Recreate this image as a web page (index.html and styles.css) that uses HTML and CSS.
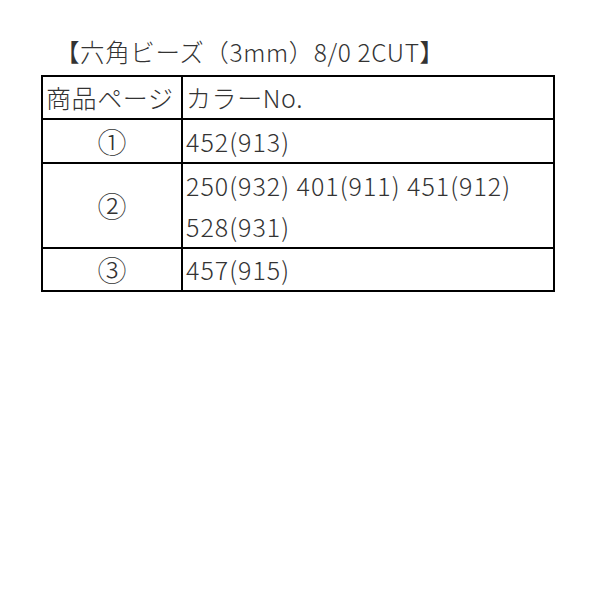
FILE: index.html
```html
<!DOCTYPE html>
<html lang="ja">
<head>
<meta charset="utf-8">
<link rel="stylesheet" href="styles.css">
</head>
<body>
<div class="page">
  <p class="title">【六角ビーズ（3mm）8/0 2CUT】</p>
  <table class="colors">
    <tr class="row-head">
      <td class="c-page head">商品ページ</td>
      <td class="c-color head">カラーNo.</td>
    </tr>
    <tr class="row-1">
      <td class="c-page center">①</td>
      <td class="c-color">452(913)</td>
    </tr>
    <tr class="row-2">
      <td class="c-page center">②</td>
      <td class="c-color">250(932) 401(911) 451(912)<br>528(931)</td>
    </tr>
    <tr class="row-3">
      <td class="c-page center">③</td>
      <td class="c-color">457(915)</td>
    </tr>
  </table>
</div>
</body>
</html>
```
FILE: styles.css
```css
html, body {
  margin: 0;
  padding: 0;
  background: #fff;
}
.page {
  padding: 35px 0 0 41px;
  font-family: "Noto Sans CJK JP", "Noto Sans", sans-serif;
  font-weight: 300;
  color: #333;
}
.title {
  margin: 0 0 6px 0;
  padding-left: 14px;
  font-size: 24.5px;
  line-height: 34px;
  letter-spacing: 0.6px;
  white-space: nowrap;
}
.colors {
  border-collapse: collapse;
  width: 514px;
  table-layout: fixed;
  font-size: 25px;
  letter-spacing: 1px;
}
.colors td {
  border: 2px solid #000;
  padding: 0 0 0 3px;
  line-height: 41px;
  vertical-align: middle;
  white-space: nowrap;
}
.colors .c-page {
  width: 135px;
}
.colors .head {
  letter-spacing: 0.6px;
}
.colors .center {
  text-align: center;
  padding: 0;
  font-size: 29px;
  letter-spacing: 0;
}
.row-head td { height: 41px; }
.row-1 td { height: 42px; }
.row-2 td { height: 83px; }
.row-3 td { height: 40px; }
```
